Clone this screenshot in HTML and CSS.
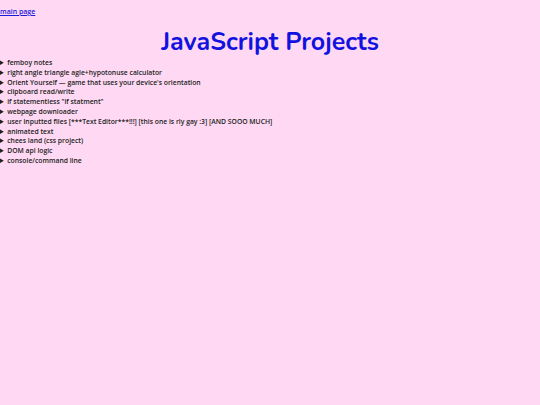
FILE: index.html
```html
<!DOCTYPE html>
<html>
<head>
<meta charset="utf-8">
<link rel="stylesheet" href="styles.css">
</head>
<body>
<a class="home" href="#">main page</a>
<h1 class="title">JavaScript Projects</h1>
<div class="projects">
<details><summary>femboy notes</summary></details>
<details><summary>right angle triangle agle+hypotonuse calculator</summary></details>
<details><summary>Orient Yourself — game that uses your device's orientation</summary></details>
<details><summary>clipboard read/write</summary></details>
<details><summary>if statementless "if statment"</summary></details>
<details><summary>webpage downloader</summary></details>
<details><summary>user inputted files [***Text Editor***!!!] [this one is rly gay :3] [AND SOOO MUCH]</summary></details>
<details><summary>animated text</summary></details>
<details><summary>chees land (css project)</summary></details>
<details><summary>DOM api logic</summary></details>
<details><summary>console/command line</summary></details>
</div>
</body>
</html>
```
FILE: styles.css
```css
html, body {
  margin: 0;
  padding: 0;
  background: #ffd9f3;
}
body {
  font-family: "Open Sans", "DejaVu Sans", sans-serif;
  color: #000;
}
.home {
  display: block;
  padding-top: 7px;
  font-size: 7px;
  line-height: 9px;
  color: #1a1adb;
  font-weight: 600;
}
.title {
  margin: 11px 0 1px;
  text-align: center;
  font-family: "Nunito", "Lato", sans-serif;
  font-weight: 700;
  font-size: 25px;
  line-height: 30px;
  color: #1212e0;
}
.projects {
  font-size: 6.8px;
  line-height: 9.8px;
  font-weight: 600;
  color: #222;
}
.projects details summary {
  cursor: pointer;
}
```
